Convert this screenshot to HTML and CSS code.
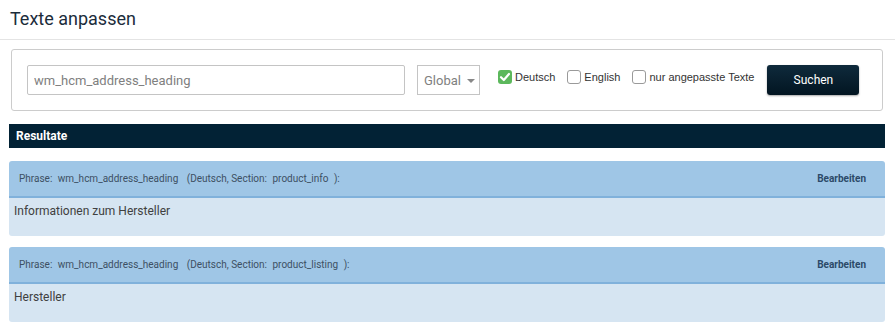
FILE: index.html
```html
<!DOCTYPE html>
<html lang="de">
<head>
  <meta charset="UTF-8">
  <title>Texte anpassen</title>
  <link rel="stylesheet" href="styles.css">
</head>
<body>

<div class="page-header">
  <h1>Texte anpassen</h1>
</div>

<div class="content">
  <!-- SEARCH FILTER -->
  <div class="filter-box">
    <input type="text" class="search-input" value="wm_hcm_address_heading">
    <div class="select-box">
      <span>Global</span>
      <span class="caret"></span>
    </div>
    <label class="check-item">
      <span class="checkbox checked">
        <svg width="14" height="14" viewBox="0 0 14 14"><path d="M3 7.2 L5.8 10 L11 4" fill="none" stroke="#fff" stroke-width="2.2" stroke-linecap="round" stroke-linejoin="round"/></svg>
      </span>
      Deutsch
    </label>
    <label class="check-item">
      <span class="checkbox"></span>
      English
    </label>
    <label class="check-item">
      <span class="checkbox"></span>
      nur angepasste Texte
    </label>
    <button class="btn-search">Suchen</button>
  </div>

  <!-- RESULTS -->
  <div class="results-bar">Resultate</div>

  <div class="result-card">
    <div class="result-head">
      <div class="phrase">
        <span>Phrase:</span>
        <span>wm_hcm_address_heading</span>
        <span class="gap">(Deutsch, Section:</span>
        <span class="gap-sm">product_info</span>
        <span>):</span>
      </div>
      <a class="edit-link">Bearbeiten</a>
    </div>
    <div class="result-body">Informationen zum Hersteller</div>
  </div>

  <div class="result-card">
    <div class="result-head">
      <div class="phrase">
        <span>Phrase:</span>
        <span>wm_hcm_address_heading</span>
        <span class="gap">(Deutsch, Section:</span>
        <span class="gap-sm">product_listing</span>
        <span>):</span>
      </div>
      <a class="edit-link">Bearbeiten</a>
    </div>
    <div class="result-body">Hersteller</div>
  </div>
</div>

</body>
</html>
```

FILE: styles.css
```css
body {
  margin: 0;
  font-family: Roboto, "Liberation Sans", Arial, sans-serif;
  background: #ffffff;
  color: #333;
}

.page-header {
  padding: 8px 10px 9px;
  border-bottom: 1px solid #e4e4e4;
}

.page-header h1 {
  margin: 0;
  font-size: 18px;
  font-weight: normal;
  line-height: 22px;
  color: #1b2c3b;
}

.content {
  padding: 0 10px 0 9px;
}

.filter-box {
  margin: 9px 2px 0;
  padding: 15px;
  border: 1px solid #cccccc;
  border-radius: 3px;
  display: flex;
  align-items: center;
}

.search-input {
  width: 378px;
  height: 30px;
  box-sizing: border-box;
  padding: 0 6px;
  border: 1px solid #c4c4c4;
  border-radius: 2px;
  font-family: Roboto, sans-serif;
  font-size: 13px;
  color: #808080;
}

.select-box {
  margin-left: 12px;
  width: 63px;
  height: 30px;
  box-sizing: border-box;
  border: 1px solid #c4c4c4;
  display: flex;
  align-items: center;
  padding-left: 6px;
  font-size: 13px;
  color: #808080;
}

.caret {
  margin-left: 6px;
  margin-top: 1px;
  width: 0;
  height: 0;
  border-left: 4px solid transparent;
  border-right: 4px solid transparent;
  border-top: 4px solid #888;
}

.check-item {
  display: flex;
  align-items: center;
  gap: 3px;
  margin-left: 12px;
  font-family: "Liberation Sans", Arial, sans-serif;
  font-size: 11px;
  color: #333;
  margin-top: -6px;
}

.check-item:first-of-type {
  margin-left: 18px;
}

.checkbox {
  width: 14px;
  height: 14px;
  box-sizing: border-box;
  border: 1px solid #9a9a9a;
  border-radius: 3px;
  background: #fff;
  display: inline-block;
}

.checkbox.checked {
  border: none;
  background: #5cb85c;
}

.checkbox svg {
  display: block;
}

.btn-search {
  margin-left: 13px;
  width: 92px;
  height: 30px;
  border: none;
  border-radius: 3px;
  background: linear-gradient(#0f2a3c, #021521);
  box-shadow: 0 1px 2px rgba(0, 0, 0, 0.35);
  color: #fff;
  font-family: Roboto, sans-serif;
  font-size: 12px;
  cursor: pointer;
}

.results-bar {
  margin-top: 13px;
  height: 24px;
  line-height: 24px;
  padding-left: 7px;
  background: #022235;
  color: #fff;
  font-size: 12px;
  font-weight: bold;
}

.result-card {
  margin-top: 13px;
  border-radius: 3px;
  overflow: hidden;
}

.result-card + .result-card {
  margin-top: 11px;
}

.result-head {
  height: 35px;
  background: #9fc6e6;
  border-bottom: 2px solid #80b1db;
  display: flex;
  align-items: center;
  justify-content: space-between;
  padding: 0 19px 0 10px;
  font-size: 10px;
}

.phrase {
  color: #3d5063;
}

.phrase span {
  margin-right: 3px;
}

.phrase .gap {
  margin-left: 3px;
}

.phrase .gap-sm {
  margin-left: 0;
}

.edit-link {
  color: #2c4a69;
  font-weight: bold;
  cursor: pointer;
}

.result-body {
  height: 38px;
  background: #d6e5f2;
  padding: 6px 5px 0;
  box-sizing: border-box;
  font-size: 12px;
  color: #404040;
}
```
